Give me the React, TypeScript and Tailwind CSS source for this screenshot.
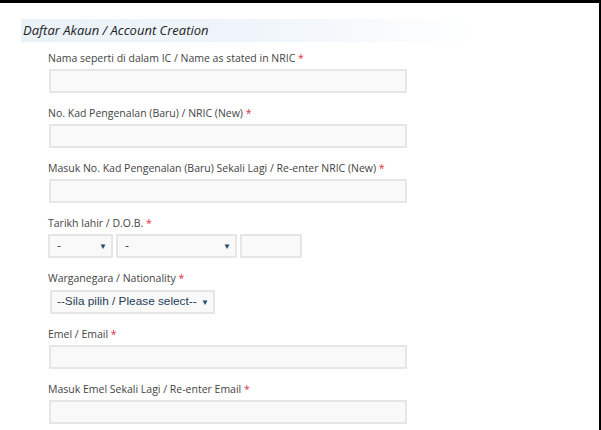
const labelFont = { fontFamily: '"Open Sans", "Noto Sans", sans-serif' };

function Req() {
  return <span className="text-[#e0303f]"> *</span>;
}

function Label({ text }: { text: string }) {
  return (
    <div className="whitespace-nowrap text-[10.5px] leading-[14px] text-[#444]" style={labelFont}>
      {text}
      <Req />
    </div>
  );
}

function TextInput({ className = "w-[358px]" }: { className?: string }) {
  return <div className={`h-[24px] border-2 border-[#e6e6e6] bg-[#f9f9f9] ${className}`} />;
}

function Select({ value, className }: { value: string; className: string }) {
  return (
    <div
      className={`flex h-[24px] items-center justify-between border-2 border-[#e6e6e6] bg-[#f9f9f9] pr-[4px] ${className}`}
    >
      <span
        className="whitespace-nowrap text-[11.8px] leading-none text-[#1f3b57]"
        style={{ fontFamily: '"Liberation Sans", Arial, sans-serif' }}
      >
        {value}
      </span>
      <span className="text-[8px] leading-none text-[#1f4a72]">▼</span>
    </div>
  );
}

function Field({ label, children }: { label: string; children: React.ReactNode }) {
  return (
    <div className="flex flex-col gap-[4px]">
      <Label text={label} />
      {children}
    </div>
  );
}

export default function App() {
  return (
    <div className="h-[430px] w-[601px] overflow-hidden bg-black pt-[3px] pr-[2px]">
      <div className="h-full bg-white pt-[16px]">
        <div
          className="ml-[21px] flex h-[23px] w-[460px] items-center bg-gradient-to-r from-[#eaf2f9] via-[#eff5fa] to-white pl-[2px]"
          style={{ fontFamily: '"Open Sans", "Noto Sans", sans-serif' }}
        >
          <span className="text-[13px] italic text-[#222]">Daftar Akaun / Account Creation</span>
        </div>
        <div className="ml-[48px] mt-[9px] flex flex-col gap-[13px]">
          <Field label="Nama seperti di dalam IC / Name as stated in NRIC">
            <TextInput className="ml-[1px] w-[358px]" />
          </Field>
          <Field label="No. Kad Pengenalan (Baru) / NRIC (New)">
            <TextInput className="ml-[1px] w-[358px]" />
          </Field>
          <Field label="Masuk No. Kad Pengenalan (Baru) Sekali Lagi / Re-enter NRIC (New)">
            <TextInput className="ml-[1px] w-[358px]" />
          </Field>
          <Field label="Tarikh lahir / D.O.B.">
            <div className="flex gap-[3px]">
              <Select value="-" className="w-[65px] pl-[7px]" />
              <Select value="-" className="w-[121px] pl-[7px]" />
              <TextInput className="w-[62px]" />
            </div>
          </Field>
          <Field label="Warganegara / Nationality">
            <div className="pt-[1px]">
              <Select value="--Sila pilih / Please select--" className="ml-[2px] w-[165px] pl-[5px]" />
            </div>
          </Field>
          <Field label="Emel / Email">
            <TextInput className="ml-[1px] w-[358px]" />
          </Field>
          <Field label="Masuk Emel Sekali Lagi / Re-enter Email">
            <TextInput className="ml-[1px] w-[358px]" />
          </Field>
        </div>
      </div>
    </div>
  );
}
